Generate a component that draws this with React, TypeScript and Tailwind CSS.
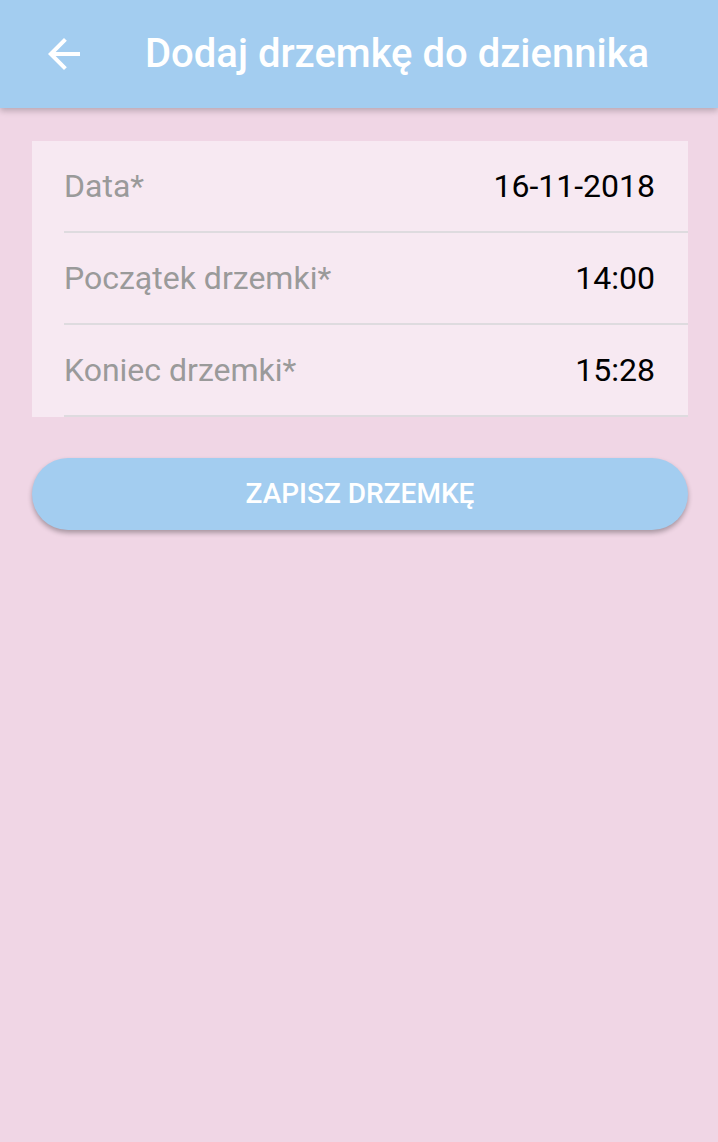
const rows = [
  { label: 'Data*', value: '16-11-2018' },
  { label: 'Początek drzemki*', value: '14:00' },
  { label: 'Koniec drzemki*', value: '15:28' },
];

function BackArrow() {
  return (
    <svg width="48" height="48" viewBox="0 0 24 24" fill="currentColor">
      <path d="M20 11H7.83l5.59-5.59L12 4l-8 8 8 8 1.41-1.41L7.83 13H20v-2z" />
    </svg>
  );
}

export default function App() {
  return (
    <div className="min-h-[1142px] bg-[#f0d6e5] font-['Roboto',sans-serif]">
      {/* App bar */}
      <header className="h-[108px] bg-[#a3cdf0] flex items-center shadow-[0_3px_6px_rgba(0,0,0,0.22)] relative">
        <button className="ml-[40px] w-[48px] h-[48px] flex items-center justify-center text-white">
          <BackArrow />
        </button>
        <h1 className="ml-[57px] text-white text-[40px] font-medium leading-none">
          Dodaj drzemkę do dziennika
        </h1>
      </header>

      <main className="ml-8 mr-[30px] pt-[33px]">
        <div className="bg-[#f7e9f2] pl-8">
          {rows.map((row) => (
            <div
              key={row.label}
              className="h-[92px] flex items-center justify-between pr-[33px] border-b-2 border-[#dedbdf]"
            >
              <span className="text-[32px] text-[#9a9a9a]">{row.label}</span>
              <span className="text-[32px] text-black">{row.value}</span>
            </div>
          ))}
        </div>

        <button className="mt-[41px] w-full h-[72px] rounded-full bg-[#a3cdf0] text-white text-[28px] font-medium shadow-[0_3px_5px_rgba(0,0,0,0.3)]">
          ZAPISZ DRZEMKĘ
        </button>
      </main>
    </div>
  );
}
